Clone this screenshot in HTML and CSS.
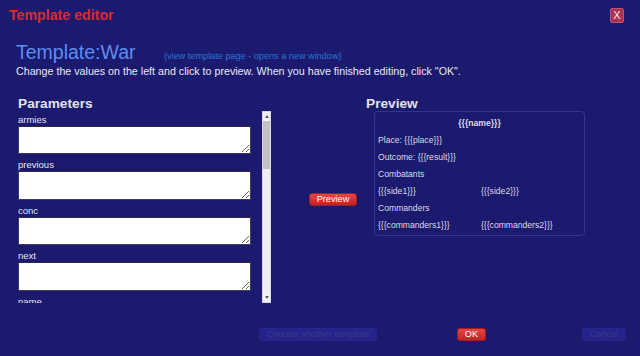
FILE: index.html
```html
<!DOCTYPE html>
<html>
<head>
<meta charset="utf-8">
<link rel="stylesheet" href="styles.css">
</head>
<body>
<div class="dialog">
  <div class="titlebar">
    <span class="title">Template editor</span>
    <span class="close">X</span>
  </div>
  <div class="header">
    <span class="tname">Template:War</span>
    <a class="tlink">(view template page - opens a new window)</a>
  </div>
  <p class="intro">Change the values on the left and click to preview. When you have finished editing, click "OK".</p>
  <div class="main">
    <section class="params">
      <h2 class="heading">Parameters</h2>
      <div class="scrollwrap">
        <div class="fields">
          <div class="field"><label>armies</label><textarea></textarea></div>
          <div class="field"><label>previous</label><textarea></textarea></div>
          <div class="field"><label>conc</label><textarea></textarea></div>
          <div class="field"><label>next</label><textarea></textarea></div>
          <div class="field"><label>name</label><textarea></textarea></div>
        </div>
        <div class="scrollbar">
          <div class="sb-btn"><span class="arr-up"></span></div>
          <div class="sb-thumb"></div>
          <div class="sb-track"></div>
          <div class="sb-btn"><span class="arr-down"></span></div>
        </div>
      </div>
    </section>
    <div class="mid">
      <span class="btn red">Preview</span>
    </div>
    <section class="preview">
      <h2 class="heading">Preview</h2>
      <div class="pbox">
        <div class="prow center"><b>{{{name}}}</b></div>
        <div class="prow">Place: {{{place}}}</div>
        <div class="prow">Outcome: {{{result}}}</div>
        <div class="prow">Combatants</div>
        <div class="prow two"><span>{{{side1}}}</span><span>{{{side2}}}</span></div>
        <div class="prow">Commanders</div>
        <div class="prow two"><span>{{{commanders1}}}</span><span>{{{commanders2}}}</span></div>
      </div>
    </section>
  </div>
  <div class="footer">
    <span class="btn dis choose">Choose another template</span>
    <span class="btn red ok">OK</span>
    <span class="btn dis cancel">Cancel</span>
  </div>
</div>
</body>
</html>
```
FILE: styles.css
```css
html, body {
  margin: 0;
  padding: 0;
  background: #1b1a6e;
  font-family: "Liberation Sans", Arial, sans-serif;
  color: #e6e6f0;
}
.dialog {
  width: 640px;
  height: 356px;
  overflow: hidden;
}
.titlebar {
  height: 29px;
  display: flex;
  align-items: center;
  justify-content: space-between;
  padding: 0 16px 0 9px;
}
.title {
  color: #d82c2c;
  font-weight: bold;
  font-size: 14.2px;
}
.close {
  width: 12px;
  height: 13px;
  background: #a83252;
  border: 1px solid #c0506e;
  border-radius: 2px;
  color: #f4e6ec;
  font-size: 11px;
  line-height: 13px;
  text-align: center;
  margin-top: 1px;
}
.header {
  margin-top: 12px;
  padding-left: 16px;
  height: 22px;
  line-height: 22px;
  white-space: nowrap;
}
.tname {
  color: #5b8ef0;
  font-size: 19.5px;
}
.tlink {
  color: #2b72d2;
  font-size: 9.15px;
  margin-left: 24px;
}
.intro {
  margin: 2px 0 0 16px;
  font-size: 10.7px;
  line-height: 13px;
  white-space: nowrap;
  color: #e8e8f2;
}
.main {
  display: flex;
  margin-top: 18px;
  padding-left: 18px;
}
.heading {
  margin: 0;
  font-size: 13.7px;
  line-height: 15px;
  font-weight: bold;
  color: #e2e2ec;
}
.params {
  width: 253px;
}
.scrollwrap {
  display: flex;
  height: 192px;
  justify-content: space-between;
}
.fields {
  width: 244px;
  overflow: hidden;
}
.field {
  margin-top: 4px;
}
.field:first-child {
  margin-top: 2px;
}
.field label {
  display: block;
  font-size: 9.5px;
  line-height: 13px;
  color: #e4e4ee;
}
.field textarea {
  display: block;
  box-sizing: border-box;
  width: 233px;
  height: 28.4px;
  margin: 0;
  border: 1px solid #3c3c60;
  border-top-color: #2a2a48;
  background: #fff;
  padding: 0;
}
.scrollbar {
  width: 9px;
  display: flex;
  flex-direction: column;
  background: #efeff2;
  border: 1px solid #d8d8e0;
  box-sizing: border-box;
}
.sb-btn {
  height: 9px;
  display: flex;
  align-items: center;
  justify-content: center;
  background: #f4f4f6;
}
.arr-up {
  width: 0; height: 0;
  border-left: 2px solid transparent;
  border-right: 2px solid transparent;
  border-bottom: 3px solid #606060;
}
.arr-down {
  width: 0; height: 0;
  border-left: 2px solid transparent;
  border-right: 2px solid transparent;
  border-top: 3px solid #606060;
}
.sb-thumb {
  height: 48px;
  background: #c2c2c6;
}
.sb-track {
  flex: 1;
}
.mid {
  width: 95px;
  padding-top: 92px;
  padding-left: 38px;
  box-sizing: border-box;
}
.btn {
  display: inline-block;
  box-sizing: border-box;
  height: 13px;
  line-height: 11px;
  font-size: 9.2px;
  text-align: center;
  border-radius: 3px;
  white-space: nowrap;
}
.red {
  background: linear-gradient(#e64646, #c42222);
  border: 1px solid #a41c1c;
  color: #ffffff;
}
.mid .btn {
  width: 48px;
}
.dis {
  background: #23238a;
  border: 1px solid #262690;
  color: #3a3a8c;
}
.preview {
  flex: 1;
}
.pbox {
  margin-left: 8px;
  width: 211px;
  height: 125px;
  box-sizing: border-box;
  border: 1px solid #34348a;
  border-radius: 4px;
  padding: 3px;
  font-size: 8.6px;
  color: #dadaec;
}
.prow {
  height: 17px;
  line-height: 17px;
  white-space: nowrap;
}
.prow.center {
  text-align: center;
}
.prow.two {
  display: grid;
  grid-template-columns: 103px 1fr;
}
.footer {
  display: flex;
  margin-top: 25px;
  padding-left: 259px;
}
.choose { width: 118px; }
.ok { width: 29px; margin-left: 80px; }
.cancel { width: 44px; margin-left: 96px; }
```
